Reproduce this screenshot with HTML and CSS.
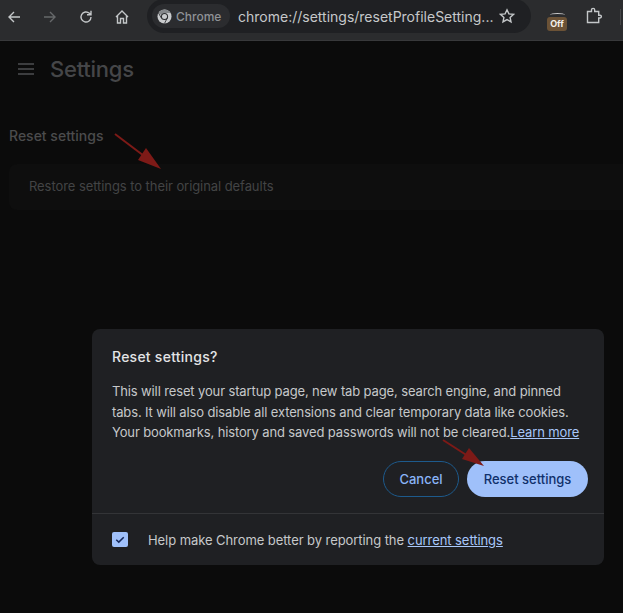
FILE: index.html
```html
<!DOCTYPE html>
<html lang="en">
<head>
    <meta charset="UTF-8">
    <meta name="viewport" content="width=device-width, initial-scale=1.0">
    <title>Settings - Reset settings</title>
    <link rel="stylesheet" href="styles.css">
</head>
<body>
    <header class="toolbar">
        <div class="nav-buttons">
            <svg class="tb-icon" viewBox="0 0 16 16"><path d="M14 8H3M8 3L3 8l5 5"/></svg>
            <svg class="tb-icon tb-icon-off" viewBox="0 0 16 16"><path d="M2 8h11M8 3l5 5-5 5"/></svg>
            <svg class="tb-icon" viewBox="0 0 16 16"><path d="M13 8a5 5 0 1 1-1.600-3.700L13 5.800M13 1.800v4h-4"/></svg>
            <svg class="tb-icon" viewBox="0 0 16 16"><path d="M2 8l6-6 6 6M3.500 7v7H6.500V9.500h3V14h3V7"/></svg>
        </div>
        <div class="omnibox">
            <div class="chip">
                <svg class="chrome-logo" viewBox="0 0 16 16">
                    <circle cx="8" cy="8" r="7.500" fill="#c9cbcd"/>
                    <path d="M8 .5a7.500 7.500 0 0 1 6.500 3.750H8a3.750 3.750 0 0 0-3.500 2.400L1.900 3.600A7.500 7.500 0 0 1 8 .5z" fill="#85888b"/>
                    <circle cx="8" cy="8" r="3.800" fill="#2b2c2f"/>
                    <circle cx="8" cy="8" r="2.700" fill="#c9cbcd"/>
                    <path class="logo-cut" d="M11.500 8.500L8 15.400M4.800 10L1.500 4"/>
                </svg>
                <span>Chrome</span>
            </div>
            <span class="url">chrome://settings/resetProfileSetting...</span>
            <svg class="star" viewBox="0 0 16 16"><path d="M8 1.800l1.900 4.100 4.500.500-3.300 3 .9 4.400L8 11.600l-4 2.200.9-4.400-3.300-3 4.500-.500z"/></svg>
        </div>
        <div class="ext-off">
            <span class="ext-arc"></span>
            <span class="ext-badge">Off</span>
        </div>
        <svg class="puzzle" viewBox="0 0 18 18"><path d="M2.500 4.500h4V3a1.600 1.600 0 0 1 3.200 0v1.500h4v3.700H15a1.400 1.400 0 0 1 0 2.800h-1.300v4.500H2.500z"/></svg>
        <span class="tb-sep"></span>
    </header>

    <main class="page">
        <div class="page-head">
            <div class="hamburger"><span></span><span></span><span></span></div>
            <h1>Settings</h1>
        </div>
        <h2 class="section-title">Reset settings</h2>
        <div class="card">Restore settings to their original defaults</div>
    </main>

    <section class="dialog">
        <div class="dialog-body">
            <h3>Reset settings?</h3>
            <p>This will reset your startup page, new tab page, search engine, and pinned tabs. It will also disable all extensions and clear temporary data like cookies. Your bookmarks, history and saved passwords will not be cleared.<a href="#">Learn more</a></p>
            <div class="actions">
                <button class="btn btn-cancel">Cancel</button>
                <button class="btn btn-primary">Reset settings</button>
            </div>
        </div>
        <div class="dialog-foot">
            <span class="checkbox">
                <svg viewBox="0 0 16 16"><path d="M4 8.300l2.700 2.500L12 5.500"/></svg>
            </span>
            <span class="foot-text">Help make Chrome better by reporting the <a href="#">current settings</a></span>
        </div>
    </section>

    <!-- flechas de anotacion sobre la captura -->
    <svg class="arrow arrow-one" viewBox="0 0 50 40"><path class="shaft" d="M1 1L34 26"/><path class="head" d="M47 36L24 27 32 15z"/></svg>
    <svg class="arrow arrow-two" viewBox="0 0 44 30"><path class="shaft" d="M1 1L29 19"/><path class="head" d="M42 27L20 20 27 9z"/></svg>
</body>
</html>
```

FILE: styles.css
```css
* {
    box-sizing: border-box;
}

html, body {
    height: 100%;
}

body {
    margin: 0;
    background-color: #0b0b0b;
    font-family: Inter, 'Liberation Sans', sans-serif;
    overflow: hidden;
    position: relative;
}

.toolbar {
    height: 41px;
    background-color: #2b2c2e;
    border-bottom: 1px solid #38393b;
    display: flex;
    align-items: flex-start;
}

.nav-buttons {
    display: flex;
    gap: 20px;
    padding: 9px 0 0 6px;
    width: 147px;
}

.tb-icon {
    width: 16px;
    height: 16px;
    fill: none;
    stroke: #c4c7c9;
    stroke-width: 1.4;
}

.tb-icon-off {
    stroke: #66686a;
}

.omnibox {
    width: 384px;
    height: 34px;
    background-color: #1f2023;
    border-radius: 17px;
    display: flex;
    align-items: center;
    padding-left: 5px;
    margin-top: -1px;
}

.chip {
    width: 78px;
    height: 24px;
    flex: none;
    background-color: #2b2c2f;
    border-radius: 12px;
    display: flex;
    align-items: center;
    gap: 4px;
    padding-left: 5px;
    color: #8f9296;
    font-size: 12px;
    font-weight: 500;
}

.chrome-logo {
    width: 15px;
    height: 15px;
}

.logo-cut {
    fill: none;
    stroke: #2b2c2f;
    stroke-width: 0.9;
}

.url {
    color: #c6c8ca;
    font-size: 14px;
    margin-left: 8px;
    width: 253px;
    flex: none;
    white-space: nowrap;
}

.star {
    width: 16px;
    height: 16px;
    flex: none;
    margin-left: 8px;
    fill: none;
    stroke: #c4c7c9;
    stroke-width: 1.4;
}

.ext-off {
    width: 22px;
    margin: 13px 0 0 15px;
    display: flex;
    flex-direction: column;
    align-items: center;
}

.ext-arc {
    width: 15px;
    height: 4px;
    border-top: 1px solid #c9c9c9;
    border-radius: 50% 50% 0 0;
}

.ext-badge {
    width: 20px;
    height: 14px;
    border-radius: 3px;
    background-color: #6b5236;
    color: #f3f0ea;
    font-size: 9px;
    font-weight: 700;
    line-height: 14px;
    text-align: center;
}

.puzzle {
    width: 18px;
    height: 18px;
    margin: 7px 0 0 17px;
    fill: none;
    stroke: #c4c7c9;
    stroke-width: 1.4;
}

.tb-sep {
    width: 1px;
    height: 16px;
    margin: 9px 0 0 17px;
    background-color: #454648;
}

.page {
    padding-left: 9px;
}

.page-head {
    display: flex;
    align-items: center;
    height: 56px;
    padding-left: 9px;
}

.hamburger {
    width: 16px;
    display: flex;
    flex-direction: column;
    gap: 3px;
    margin-right: 16px;
}

.hamburger span {
    height: 2px;
    background-color: #3c3d3f;
}

.page-head h1 {
    margin: 0;
    color: #454648;
    font-size: 22px;
    font-weight: 500;
    letter-spacing: -0.25px;
}

.section-title {
    margin: 29px 0 0;
    color: #4b4c4d;
    font-size: 14px;
    font-weight: 500;
    line-height: 20px;
}

.card {
    margin-top: 18px;
    height: 46px;
    background-color: #0e0e0e;
    border-radius: 8px 0 0 8px;
    padding-left: 20px;
    color: #434445;
    font-size: 13px;
    letter-spacing: -0.07px;
    line-height: 44px;
}

.dialog {
    position: absolute;
    left: 92px;
    top: 329px;
    width: 512px;
    height: 236px;
    background-color: #1f2023;
    border-radius: 8px;
    color: #c6c8ca;
    font-size: 13px;
}

.dialog-body {
    padding: 19px 16px 0 20px;
    height: 185px;
    border-bottom: 1px solid #333437;
}

.dialog-body h3 {
    margin: 0;
    color: #e3e4e6;
    font-size: 14px;
    font-weight: 500;
    letter-spacing: 0.25px;
    line-height: 18px;
}

.dialog-body p {
    margin: 15px 0 0;
    letter-spacing: -0.13px;
    line-height: 20.5px;
}

a {
    color: #a8c7fa;
}

.actions {
    display: flex;
    justify-content: flex-end;
    gap: 8px;
    margin-top: 18.5px;
}

.btn {
    height: 36px;
    border-radius: 18px;
    font-family: inherit;
    font-size: 13px;
    font-weight: 500;
    padding: 0;
}

.btn-cancel {
    width: 76px;
    background: none;
    border: 1px solid #1d5a8c;
    color: #8ab4f8;
}

.btn-primary {
    width: 121px;
    background-color: #9fc0fa;
    border: none;
    color: #10306b;
}

.dialog-foot {
    display: flex;
    align-items: center;
    height: 51px;
    padding-left: 20px;
    gap: 20px;
}

.foot-text {
    letter-spacing: -0.07px;
}

.checkbox {
    width: 16px;
    height: 15px;
    background-color: #a0c1fb;
    border-radius: 2px;
    display: flex;
}

.checkbox svg {
    width: 16px;
    height: 15px;
    fill: none;
    stroke: #14275a;
    stroke-width: 1.6;
}

.arrow {
    position: absolute;
}

.arrow-one {
    left: 114px;
    top: 133px;
    width: 50px;
    height: 40px;
}

.arrow-two {
    left: 442px;
    top: 439px;
    width: 44px;
    height: 30px;
}

.shaft {
    fill: none;
    stroke: #7d1a17;
    stroke-width: 2;
}

.head {
    fill: #7d1a17;
}
```
